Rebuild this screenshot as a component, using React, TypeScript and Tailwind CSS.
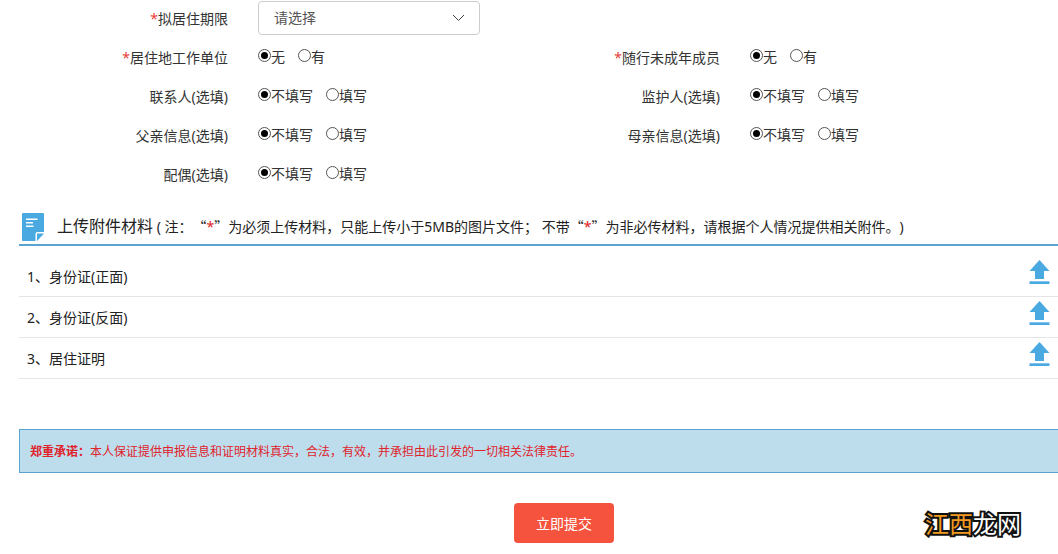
import React, { useState } from "react";

interface RadioFieldProps {
  name: string;
  label: string;
  options: string[];
  required?: boolean;
  className?: string;
}

const Required = () => <span className="text-[#e8403a]">*</span>;

const RadioField: React.FC<RadioFieldProps> = ({ name, label, options, required, className = "" }) => {
  const [value, setValue] = useState(options[0]);

  return (
    <div
      role="radiogroup"
      aria-labelledby={`${name}-label`}
      className={`flex h-[39px] items-start gap-[30px] ${className}`}
    >
      <span id={`${name}-label`} className="w-[228px] shrink-0 text-right leading-[37px]">
        {required && <Required />}
        {label}
      </span>
      <div className="flex h-[35px] items-center gap-[13px]">
        {options.map((option) => (
          <label key={option} className="flex items-center leading-5 whitespace-nowrap">
            <input
              type="radio"
              name={name}
              value={option}
              checked={value === option}
              onChange={() => setValue(option)}
              className="mb-0.5 grid size-[13px] shrink-0 appearance-none place-content-center rounded-full border border-[#555] bg-white before:size-[7px] before:rounded-full checked:before:bg-black"
            />
            {option}
          </label>
        ))}
      </div>
    </div>
  );
};

const DocumentIcon = () => (
  <svg width="22" height="28" viewBox="0 0 22 28" className="shrink-0" aria-hidden="true">
    <path d="M1 0h20a1 1 0 0 1 1 1v18h-6.500a2 2 0 0 0-2 2v7H1a1 1 0 0 1-1-1V1a1 1 0 0 1 1-1z" fill="#4ba9e1" />
    <path d="M15 20.500h7L15 28z" fill="#4ba9e1" />
    <path d="M4 6.200h11.500M4 9.700h7M4 13.200h7.500" stroke="#fff" strokeWidth="1.400" />
  </svg>
);

const UploadIcon = () => (
  <svg width="21" height="24" viewBox="0 0 21 24" fill="#4ba9e1" aria-hidden="true">
    <path d="M10.500 0L20.500 11H15v8H6v-8H.5z" />
    <path d="M.5 21.300h20V24H.5z" />
  </svg>
);

// Full-width quotes around the red star
const QuotedStar = () => (
  <span className="font-['Noto_Sans_CJK_SC',sans-serif]">
    “<span className="font-['Noto_Sans'] text-[#e02020]">*</span>”
  </span>
);

const attachments = ["身份证(正面)", "身份证(反面)", "居住证明"];

export default function App() {
  return (
    <form
      lang="zh-CN"
      onSubmit={(e) => e.preventDefault()}
      className="relative overflow-hidden bg-white pb-[11px] font-['Noto_Sans','Noto_Sans_CJK_SC',sans-serif] text-sm text-[#333] [text-spacing-trim:space-all]"
    >
      {/* Form fields */}
      <div className="grid grid-cols-[492fr_566fr]">
        <div className="col-span-2 flex h-[39px] items-start gap-[30px]">
          <label htmlFor="period" className="w-[228px] shrink-0 text-right leading-[37px]">
            <Required />
            拟居住期限
          </label>
          <div className="relative mt-px w-[222px]">
            <select
              id="period"
              className="h-[34px] w-full appearance-none rounded border border-[#ccc] bg-white px-[15px] text-[#555]"
            >
              <option>请选择</option>
            </select>
            <svg
              width="13"
              height="8"
              viewBox="0 0 13 8"
              className="pointer-events-none absolute top-[13px] right-[15px]"
              fill="none"
              stroke="#444"
              aria-hidden="true"
            >
              <path d="M1 1l5.500 5.500L12 1" />
            </svg>
          </div>
        </div>
        <RadioField name="work" label="居住地工作单位" options={["无", "有"]} required />
        <RadioField name="minor" label="随行未成年成员" options={["无", "有"]} required />
        <RadioField name="contact" label="联系人(选填)" options={["不填写", "填写"]} />
        <RadioField name="guardian" label="监护人(选填)" options={["不填写", "填写"]} />
        <RadioField name="father" label="父亲信息(选填)" options={["不填写", "填写"]} />
        <RadioField name="mother" label="母亲信息(选填)" options={["不填写", "填写"]} />
        <RadioField name="spouse" label="配偶(选填)" options={["不填写", "填写"]} className="col-span-2" />
      </div>

      {/* Attachments */}
      <section className="mt-[17px] ml-[19px] text-[#222]">
        <div className="flex items-center gap-[13px] border-b-2 border-[#5ba4cf] pb-[3px] pl-[3px]">
          <DocumentIcon />
          <h2 className="leading-7 whitespace-nowrap">
            <span className="text-base leading-7">上传附件材料</span> ( 注：
            <QuotedStar />
            为必须上传材料，只能上传小于5MB的图片文件； 不带
            <QuotedStar />
            为非必传材料，请根据个人情况提供相关附件。)
          </h2>
        </div>
        <ul className="mt-[10px]">
          {attachments.map((item, index) => (
            <li key={item} className="flex h-[41px] items-start justify-between border-b border-[#e5e5e5] px-2">
              <span className="leading-[42px]">
                {index + 1}、{item}
              </span>
              <button type="button" aria-label={`上传${item}`} className="mt-1">
                <UploadIcon />
              </button>
            </li>
          ))}
        </ul>
      </section>

      <p className="mt-[50px] ml-[19px] border-y border-l border-[#5ba4cf] bg-[#bddded] px-[10px] pt-0.5 text-xs leading-10 text-[#e0222a]">
        <strong>郑重承诺：</strong>
        本人保证提供申报信息和证明材料真实，合法，有效，并承担由此引发的一切相关法律责任。
      </p>

      <div className="mt-[30px] flex justify-center pl-[70px]">
        <button type="submit" className="h-10 w-[100px] rounded bg-[#f5533d] pt-0.5 text-white">
          立即提交
        </button>
      </div>

      {/* Site mark */}
      <div className="absolute right-[37px] bottom-[14px] text-2xl leading-8 text-white [-webkit-text-stroke:4px_#111] [paint-order:stroke_fill]">
        <span className="text-[#f29a1f]">江西</span>龙网
      </div>
    </form>
  );
}
